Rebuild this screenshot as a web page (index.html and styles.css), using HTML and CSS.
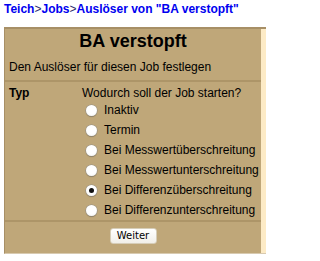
FILE: index.html
```html
<!DOCTYPE html>
<html lang="de">
<head>
<meta charset="utf-8">
<title>Auslöser</title>
<link rel="stylesheet" href="styles.css">
</head>
<body>
<div class="crumbs"><a href="#">Teich</a><span class="sep">&gt;</span><a href="#">Jobs</a><span class="sep">&gt;</span><a href="#">Auslöser von "BA verstopft"</a></div>
<div class="frame">
  <div class="panel">
    <div class="head">
      <h1 class="title">BA verstopft</h1>
      <p class="subtitle">Den Auslöser für diesen Job festlegen</p>
    </div>
    <div class="row">
      <div class="label">Typ</div>
      <div class="field">
        <div class="question">Wodurch soll der Job starten?</div>
        <label class="opt"><span class="radio"></span>Inaktiv</label>
        <label class="opt"><span class="radio"></span>Termin</label>
        <label class="opt"><span class="radio"></span>Bei Messwertüberschreitung</label>
        <label class="opt"><span class="radio"></span>Bei Messwertunterschreitung</label>
        <label class="opt"><span class="radio checked"></span>Bei Differenzüberschreitung</label>
        <label class="opt"><span class="radio"></span>Bei Differenzunterschreitung</label>
      </div>
    </div>
    <div class="actions"><button class="btn" type="button">Weiter</button></div>
  </div>
  <div class="side"></div>
</div>
</body>
</html>
```
FILE: styles.css
```css
html, body {
  margin: 0;
  padding: 0;
  background: #ffffff;
  font-family: "Liberation Sans", Arial, sans-serif;
  font-size: 12px;
  color: #000;
  overflow: hidden;
}
.crumbs {
  padding: 2px 0 0 4px;
  height: 27px;
  box-sizing: border-box;
  font-weight: bold;
  font-size: 12px;
  line-height: 14px;
  white-space: nowrap;
}
.crumbs a {
  color: #0000f0;
  text-decoration: none;
}
.crumbs .sep {
  color: #2a2a6a;
  font-weight: normal;
}
.frame {
  margin-left: 4px;
  width: 261px;
  display: flex;
  border-top: 2px solid #a78f66;
  border-left: 1px solid #a78f66;
  border-bottom: 1px solid #d8cab0;
}
.panel {
  width: 256px;
  flex: none;
  background: #bfa779;
}
.side {
  flex: 1;
  background: #fdebc6;
}
.head {
  padding: 1px 0 6px;
}
.title {
  margin: 0;
  text-align: center;
  font-size: 18px;
  line-height: 22px;
  font-weight: bold;
}
.subtitle {
  margin: 8px 0 0 4px;
  line-height: 14px;
}
.row {
  display: flex;
  border-top: 2px solid #ad9568;
  padding-top: 4px;
}
.label {
  width: 73px;
  padding-left: 4px;
  font-weight: bold;
  line-height: 14px;
}
.field {
  display: flex;
  flex-direction: column;
}
.question {
  line-height: 14px;
}
.opt {
  display: flex;
  align-items: center;
  height: 20px;
  padding-left: 4px;
  white-space: nowrap;
}
.opt:first-of-type {
  margin-top: 0;
}
.radio {
  width: 11px;
  height: 11px;
  border-radius: 50%;
  background: radial-gradient(circle at 50% 40%, #ffffff 55%, #e4e4e4 100%);
  box-shadow: 0 0 0 0.5px #8d8d8d, 0 1px 1px rgba(0,0,0,0.25);
  margin-right: 7px;
  position: relative;
  flex: none;
}
.radio.checked::after {
  content: "";
  position: absolute;
  left: 3px;
  top: 3px;
  width: 5px;
  height: 5px;
  border-radius: 50%;
  background: #111;
}
.actions {
  border-top: 2px solid #ad9568;
  display: flex;
  justify-content: center;
  padding: 6px 0 9px;
}
.btn {
  width: 47px;
  height: 16px;
  padding: 0;
  font-family: "DejaVu Sans", sans-serif;
  font-size: 10px;
  line-height: 14px;
  color: #000;
  background: linear-gradient(#ffffff, #f1efe9);
  border: 1px solid #d6cdb8;
  border-radius: 3px;
}
```
